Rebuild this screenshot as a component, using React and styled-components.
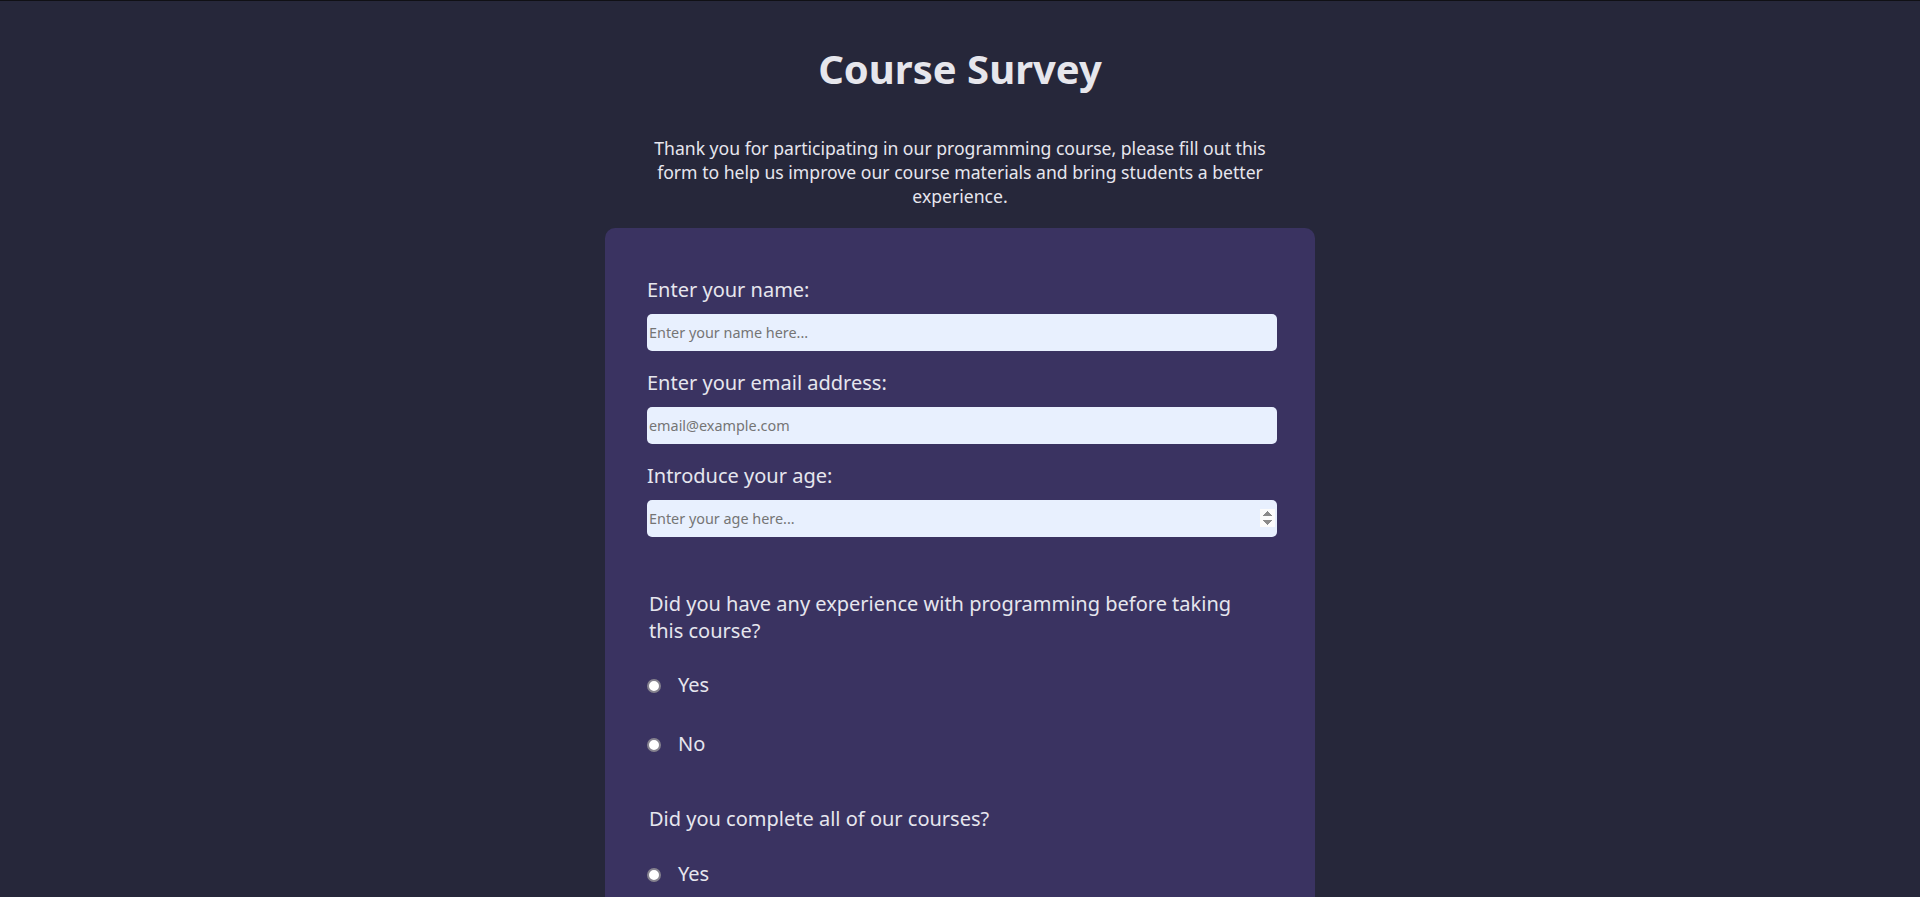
import React from 'react';
import { styled, createGlobalStyle } from 'styled-components';

// survey page: header text + one purple card holding the form

const questions = [
  {
    name: 'experience',
    text: 'Did you have any experience with programming before taking this course?',
    options: ['Yes', 'No'],
  },
  {
    name: 'completed',
    text: 'Did you complete all of our courses?',
    options: ['Yes', 'No'],
  },
  {
    name: 'recommend',
    text: 'Would you recommend our course to a friend?',
    options: ['Definitely', 'Maybe', 'Not sure'],
  },
];

const App = () => {
  return (
    <>
      <GlobalStyle />
      <PageDiv>
        <Title id="title">Course Survey</Title>
        <DescriptionP id="description">
          Thank you for participating in our programming course, please fill out this form to help us
          improve our course materials and bring students a better experience.
        </DescriptionP>
        <FormCard id="survey-form" onSubmit={(e) => e.preventDefault()}>
          <FieldDiv>
            <FieldLabel htmlFor="name">Enter your name:</FieldLabel>
            <TextInput id="name" type="text" placeholder="Enter your name here..." required />
          </FieldDiv>
          <FieldDiv>
            <FieldLabel htmlFor="email">Enter your email address:</FieldLabel>
            <TextInput id="email" type="email" placeholder="email@example.com" required />
          </FieldDiv>
          <FieldDiv $last>
            <FieldLabel htmlFor="number">Introduce your age:</FieldLabel>
            <TextInput id="number" type="number" min="10" max="99" placeholder="Enter your age here..." />
          </FieldDiv>

          {questions.map((q) => (
            <RadioGroupDiv key={q.name}>
              <QuestionP>{q.text}</QuestionP>
              {q.options.map((opt) => (
                <RadioLabel key={opt}>
                  <RadioInput type="radio" name={q.name} value={opt} />
                  {opt}
                </RadioLabel>
              ))}
            </RadioGroupDiv>
          ))}

          <RadioGroupDiv>
            <QuestionP>Any comments or suggestions?</QuestionP>
            <CommentArea placeholder="Write your comments here..." />
          </RadioGroupDiv>
          <SubmitButton id="submit" type="submit">Submit</SubmitButton>
        </FormCard>
      </PageDiv>
    </>
  );
};

export default App;

const GlobalStyle = createGlobalStyle`
  html {
    scrollbar-width: none;
  }
  ::-webkit-scrollbar {
    display: none;
  }
  body {
    margin: 0;
    background-color: #26273a;
    color: #e6e6ee;
    font-family: 'Noto Sans', 'Open Sans', sans-serif;
  }
`;

const PageDiv = styled.div`
  border-top: 1px solid #101015;
  padding: 40px 0 60px;
  display: flex;
  flex-direction: column;
  align-items: center;
`;

const Title = styled.h1`
  margin: 0;
  font-size: 2.5rem;
  font-weight: 700;
  color: #e6e6ec;
  text-align: center;
`;

const DescriptionP = styled.p`
  width: 630px;
  margin: 40px 0 20px;
  font-size: 1.1rem;
  text-align: center;
`;

const FormCard = styled.form`
  box-sizing: border-box;
  width: 710px;
  padding: 48px 38px 48px 42px;
  display: flex;
  flex-direction: column;
  background-color: #3a3361;
  border-radius: 10px;
`;

const FieldDiv = styled.div`
  display: flex;
  flex-direction: column;
  gap: 10.8px;
  margin-bottom: ${(props) => (props.$last ? '20px' : '17.6px')};
`;

const FieldLabel = styled.label`
  font-size: 1.25rem;
`;

const TextInput = styled.input`
  box-sizing: border-box;
  width: 100%;
  height: 37.5px;
  padding: 1px 2px;
  border: none;
  border-radius: 5px;
  background-color: #e8f0fe;
  color: #222;
  font-family: inherit;
  font-size: 0.9rem;
  &::placeholder {
    color: #757575;
  }
  &::-webkit-inner-spin-button {
    opacity: 1;
  }
`;

const RadioGroupDiv = styled.div`
  margin-top: 32.5px;
`;

const QuestionP = styled.p`
  max-width: 600px;
  margin: 0 0 12px 2px;
  font-size: 1.25rem;
`;

const RadioLabel = styled.label`
  display: flex;
  align-items: center;
  gap: 17px;
  padding: 15.75px 0;
  font-size: 1.25rem;
`;

const RadioInput = styled.input`
  appearance: none;
  box-sizing: border-box;
  width: 14px;
  height: 14px;
  margin: 3px 0 0;
  border: 2px solid #86838f;
  border-radius: 50%;
  background-color: #fff;
  &:checked {
    background-color: #6c5dd3;
    box-shadow: inset 0 0 0 2px #fff;
  }
`;

const CommentArea = styled.textarea`
  box-sizing: border-box;
  width: 100%;
  height: 120px;
  padding: 6px;
  border: none;
  border-radius: 5px;
  background-color: #e8f0fe;
  font-family: inherit;
  font-size: 0.9rem;
`;

const SubmitButton = styled.button`
  display: block;
  width: 100%;
  margin-top: 40px;
  padding: 10px 0;
  border: none;
  border-radius: 5px;
  background-color: #6c5dd3;
  color: #fff;
  font-family: inherit;
  font-size: 1.1rem;
  cursor: pointer;
`;
